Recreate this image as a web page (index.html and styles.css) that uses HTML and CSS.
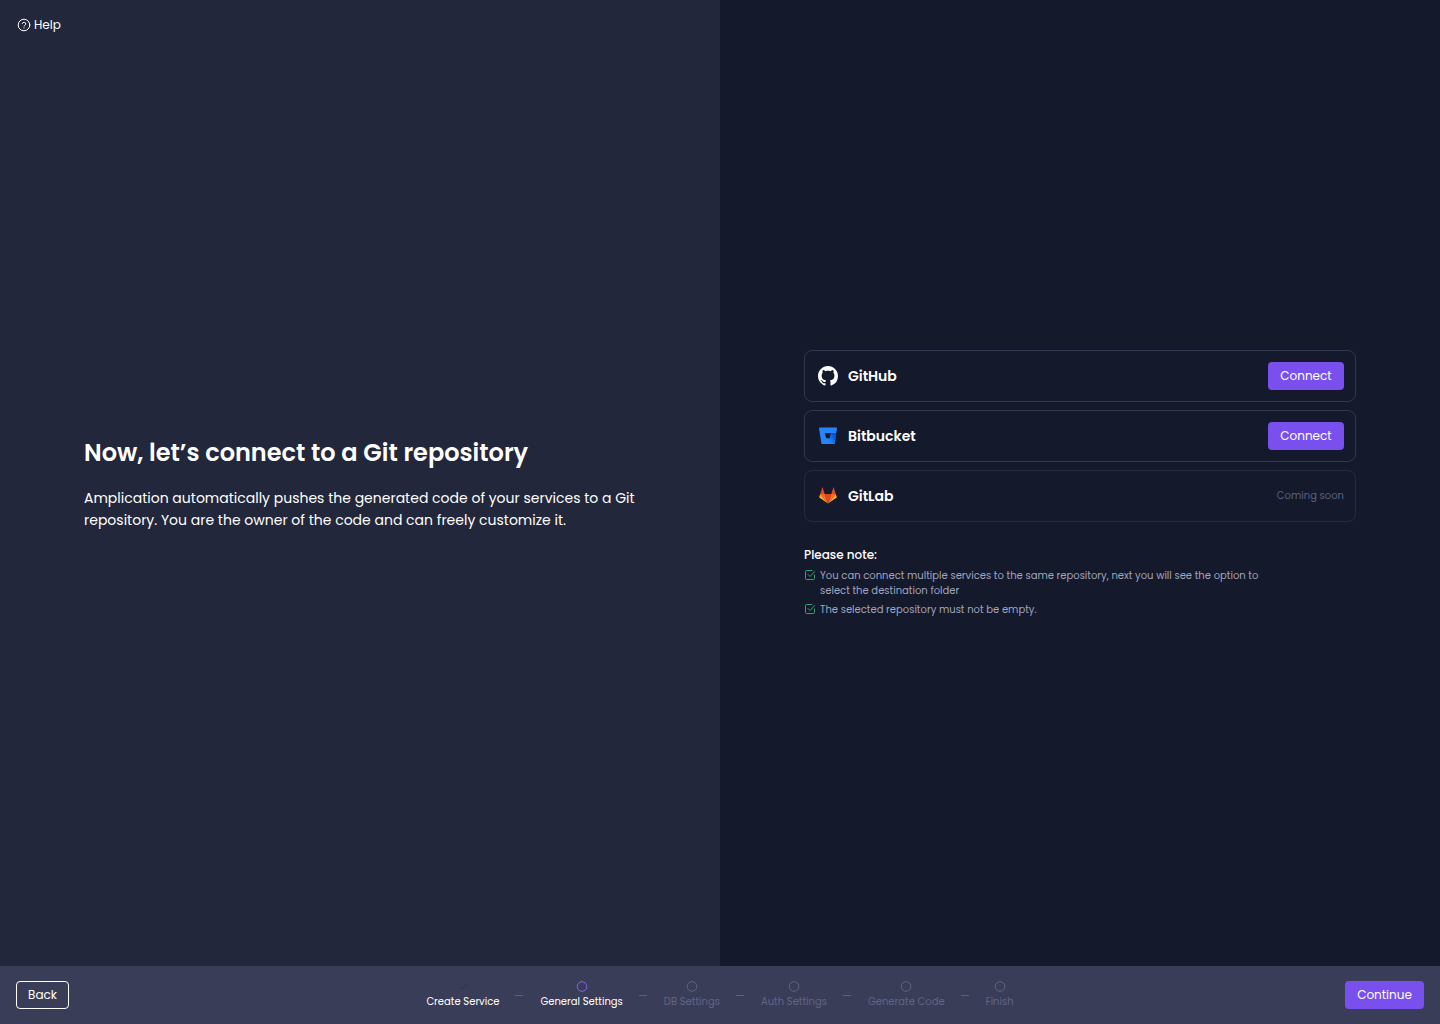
FILE: index.html
```html
<!DOCTYPE html>
<html lang="en">
<head>
<meta charset="utf-8">
<meta name="viewport" content="width=device-width, initial-scale=1">
<title>Connect to a Git repository</title>
<link rel="stylesheet" href="styles.css">
</head>
<body>
<main class="panels">
  <section class="panel panel-intro">
    <a class="help" href="#help">
      <svg class="help-icon" viewBox="0 0 14 14" fill="none" stroke="currentColor" stroke-linecap="round" stroke-linejoin="round">
        <circle cx="7" cy="7" r="5.800"/>
        <path d="M5.200 5.500a1.850 1.850 0 0 1 3.600.500c0 1.100-1.800 1.300-1.800 2.200"/>
        <path d="M7 10v.1"/>
      </svg>
      Help
    </a>
    <div class="content">
      <h1 class="title">Now, let’s connect to a Git repository</h1>
      <p class="lead">Amplication automatically pushes the generated code of your services to a Git repository. You are the owner of the code and can freely customize it.</p>
    </div>
  </section>
  <section class="panel panel-providers">
    <div class="content">
      <ul class="providers">
        <li class="provider">
          <svg class="logo" viewBox="0 0 16 16" fill="#fff">
            <path d="M8 0C3.58 0 0 3.58 0 8c0 3.54 2.29 6.53 5.47 7.59.4.07.55-.17.55-.38 0-.19-.01-.82-.01-1.49-2.01.37-2.53-.49-2.69-.94-.09-.23-.48-.94-.82-1.13-.28-.15-.68-.52-.01-.53.63-.01 1.08.58 1.23.82.72 1.21 1.87.87 2.33.66.07-.52.28-.87.51-1.07-1.78-.2-3.64-.89-3.64-3.95 0-.87.31-1.59.82-2.15-.08-.2-.36-1.02.08-2.12 0 0 .67-.21 2.2.82.64-.18 1.32-.27 2-.27s1.36.09 2 .27c1.53-1.04 2.2-.82 2.2-.82.44 1.1.16 1.92.08 2.12.51.56.82 1.27.82 2.15 0 3.07-1.87 3.75-3.65 3.95.29.25.54.73.54 1.48 0 1.07-.01 1.93-.01 2.2 0 .21.15.46.55.38A8.01 8.01 0 0 0 16 8c0-4.42-3.58-8-8-8z"/>
          </svg>
          <span class="provider-name">GitHub</span>
          <button class="button" type="button">Connect</button>
        </li>
        <li class="provider">
          <svg class="logo" viewBox="0 0 20 20">
            <defs>
              <linearGradient id="bucket-shade" x1="18" y1="8" x2="10" y2="14" gradientUnits="userSpaceOnUse">
                <stop offset=".15" stop-color="#0052cc"/>
                <stop offset="1" stop-color="#2684ff"/>
              </linearGradient>
            </defs>
            <path fill="#2684ff" fill-rule="evenodd" d="M1.600 1.600a.6.6 0 0 0-.6.7l2.400 15c.1.400.400.700.800.700h11.800c.300 0 .500-.200.600-.500L19 2.300a.6.6 0 0 0-.6-.7H1.600zM12 12.500H8.100L7 7.100h5.900L12 12.500z"/>
            <path fill="url(#bucket-shade)" d="M18.200 7.100h-5.300L12 12.500H8.100l-4.500 5.300c.2.100.4.200.600.200h11.800c.300 0 .500-.200.600-.500l1.600-10.400z"/>
          </svg>
          <span class="provider-name">Bitbucket</span>
          <button class="button" type="button">Connect</button>
        </li>
        <li class="provider provider-disabled">
          <svg class="logo" viewBox="0 0 20 20">
            <path fill="#e24329" d="M10 17.600l3.300-9.600H6.700z"/>
            <path fill="#fc6d26" d="M10 17.600L6.700 8H2.200z"/>
            <path fill="#fca326" d="M2.200 8l-1 3a.7.7 0 0 0 .3.800L10 17.600z"/>
            <path fill="#e24329" d="M2.200 8h4.500L4.800 1.800c-.100-.300-.500-.300-.600 0z"/>
            <path fill="#fc6d26" d="M10 17.600L13.300 8h4.500z"/>
            <path fill="#fca326" d="M17.800 8l1 3a.7.7 0 0 1-.3.800L10 17.600z"/>
            <path fill="#e24329" d="M17.800 8h-4.500l1.900-6.200c.100-.300.500-.300.600 0z"/>
          </svg>
          <span class="provider-name">GitLab</span>
          <span class="soon">Coming soon</span>
        </li>
      </ul>
      <h2 class="notes-title">Please note:</h2>
      <ul class="notes">
        <li class="note">
          <svg class="check" viewBox="0 0 12 12" fill="none" stroke="currentColor" stroke-linecap="round" stroke-linejoin="round">
            <path d="M10.500 6v3.500a1 1 0 0 1-1 1h-7a1 1 0 0 1-1-1v-7a1 1 0 0 1 1-1H8"/>
            <path d="M4 5.500L6 7.500l4.700-5"/>
          </svg>
          <span>You can connect multiple services to the same repository, next you will see the option to select the destination folder</span>
        </li>
        <li class="note">
          <svg class="check" viewBox="0 0 12 12" fill="none" stroke="currentColor" stroke-linecap="round" stroke-linejoin="round">
            <path d="M10.500 6v3.500a1 1 0 0 1-1 1h-7a1 1 0 0 1-1-1v-7a1 1 0 0 1 1-1H8"/>
            <path d="M4 5.500L6 7.500l4.700-5"/>
          </svg>
          <span>The selected repository must not be empty.</span>
        </li>
      </ul>
    </div>
  </section>
</main>
<footer class="footer">
  <button class="button button-outline" type="button">Back</button>
  <ol class="steps">
    <li class="step step-done">
      <svg class="step-icon" viewBox="0 0 12 12" fill="none" stroke="currentColor"><path d="M2.500 6L4.500 8l5-5"/></svg>
      Create Service
    </li>
    <li class="step step-current" aria-current="step">
      <svg class="step-icon" viewBox="0 0 12 12" fill="none" stroke="currentColor"><circle cx="6" cy="5.500" r="4.800"/></svg>
      General Settings
    </li>
    <li class="step">
      <svg class="step-icon" viewBox="0 0 12 12" fill="none" stroke="currentColor"><circle cx="6" cy="5.500" r="4.800"/></svg>
      DB Settings
    </li>
    <li class="step">
      <svg class="step-icon" viewBox="0 0 12 12" fill="none" stroke="currentColor"><circle cx="6" cy="5.500" r="4.800"/></svg>
      Auth Settings
    </li>
    <li class="step">
      <svg class="step-icon" viewBox="0 0 12 12" fill="none" stroke="currentColor"><circle cx="6" cy="5.500" r="4.800"/></svg>
      Generate Code
    </li>
    <li class="step">
      <svg class="step-icon" viewBox="0 0 12 12" fill="none" stroke="currentColor"><circle cx="6" cy="5.500" r="4.800"/></svg>
      Finish
    </li>
  </ol>
  <button class="button button-next" type="button">Continue</button>
</footer>
</body>
</html>
```
FILE: styles.css
```css
* {
  box-sizing: border-box;
}

body {
  display: flex;
  flex-direction: column;
  min-height: 100vh;
  margin: 0;
  background: #15192c;
  color: #fff;
  font-family: Poppins, Inter, "Open Sans", sans-serif;
}

h1,
h2,
p,
ul,
ol {
  margin: 0;
  padding: 0;
}

ul,
ol {
  list-style: none;
}

.panels {
  display: grid;
  grid-template-columns: 1fr 1fr;
  flex: 1;
}

.panel {
  position: relative;
  display: flex;
  flex-direction: column;
  align-items: center;
  justify-content: center;
  padding: 48px 24px;
}

.panel-intro {
  background: #22273c;
}

.content {
  width: 100%;
  max-width: 552px;
}

.help {
  position: absolute;
  top: 16px;
  left: 17px;
  display: flex;
  align-items: center;
  gap: 3px;
  color: #fff;
  font-size: 12px;
  line-height: 18px;
  text-decoration: none;
}

.help-icon {
  width: 14px;
  height: 14px;
}

.title {
  margin-bottom: 16px;
  font-size: 24px;
  font-weight: 600;
  line-height: 36px;
}

.lead {
  font-size: 14px;
  line-height: 22px;
}

.providers {
  display: flex;
  flex-direction: column;
  gap: 8px;
  margin-bottom: 22px;
}

.provider {
  display: flex;
  align-items: center;
  gap: 10px;
  height: 52px;
  padding: 0 11px 0 13px;
  border: 1px solid #32364f;
  border-radius: 8px;
}

.provider-disabled {
  border-color: #272b40;
}

.logo {
  width: 20px;
  height: 20px;
}

.provider-name {
  flex: 1;
  font-size: 14px;
  font-weight: 600;
  line-height: 20px;
}

.soon {
  color: #5c6180;
  font-size: 10px;
  line-height: 16px;
}

.button {
  min-width: 76px;
  height: 28px;
  padding: 0 11px;
  border: 0;
  border-radius: 4px;
  background: #7950ed;
  color: #fff;
  font: inherit;
  font-size: 12px;
}

.button-outline {
  min-width: 53px;
  border: 1px solid #fff;
  background: transparent;
}

.button-next {
  min-width: 79px;
}

.notes-title {
  margin-bottom: 2px;
  font-size: 12px;
  font-weight: 500;
  line-height: 22px;
}

.notes {
  display: flex;
  flex-direction: column;
  gap: 4px;
  max-width: 464px;
}

.note {
  display: flex;
  gap: 4px;
  color: #a1a5bd;
  font-size: 10px;
  line-height: 15px;
}

.check {
  flex: none;
  width: 12px;
  height: 12px;
  margin-top: 1px;
  color: #31a56d;
}

.footer {
  display: grid;
  grid-template-columns: 1fr auto 1fr;
  align-items: center;
  padding: 15px 16px;
  background: #3a3d57;
}

.button-outline {
  justify-self: start;
}

.button-next {
  justify-self: end;
}

.steps {
  display: flex;
}

.step {
  position: relative;
  display: flex;
  flex-direction: column;
  align-items: center;
  gap: 2px;
  color: #5f6588;
  font-size: 10px;
  line-height: 14px;
}

.step + .step {
  margin-left: 41px;
}

.step + .step::before {
  content: "";
  position: absolute;
  top: 14px;
  left: -25px;
  width: 8px;
  height: 1px;
  background: #53648a;
}

.step-icon {
  width: 12px;
  height: 12px;
  color: #5f6588;
}

.step-done,
.step-current {
  color: #fff;
}

.step-done .step-icon {
  color: #2f334c;
}

.step-current .step-icon {
  color: #8864f0;
}
```
